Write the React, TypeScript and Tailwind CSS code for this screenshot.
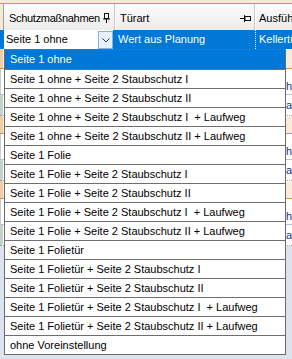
import React from "react";

const items = [
  "Seite 1 ohne",
  "Seite 1 ohne + Seite 2 Staubschutz I",
  "Seite 1 ohne + Seite 2 Staubschutz II",
  "Seite 1 ohne + Seite 2 Staubschutz I  + Laufweg",
  "Seite 1 ohne + Seite 2 Staubschutz II + Laufweg",
  "Seite 1 Folie",
  "Seite 1 Folie + Seite 2 Staubschutz I",
  "Seite 1 Folie + Seite 2 Staubschutz II",
  "Seite 1 Folie + Seite 2 Staubschutz I  + Laufweg",
  "Seite 1 Folie + Seite 2 Staubschutz II + Laufweg",
  "Seite 1 Folietür",
  "Seite 1 Folietür + Seite 2 Staubschutz I",
  "Seite 1 Folietür + Seite 2 Staubschutz II",
  "Seite 1 Folietür + Seite 2 Staubschutz I  + Laufweg",
  "Seite 1 Folietür + Seite 2 Staubschutz II + Laufweg",
  "ohne Voreinstellung",
];

function PinDown() {
  return (
    <svg width="7" height="10" viewBox="0 0 7 10" className="block">
      <rect x="1.5" y="0.5" width="4" height="5" fill="none" stroke="#111" />
      <line x1="0" y1="6" x2="7" y2="6" stroke="#111" />
      <line x1="3.5" y1="6" x2="3.5" y2="10" stroke="#111" />
    </svg>
  );
}

function PinSide() {
  return (
    <svg width="11" height="7" viewBox="0 0 11 7" className="block">
      <line x1="0" y1="3.5" x2="4" y2="3.5" stroke="#111" />
      <line x1="4.5" y1="0" x2="4.5" y2="7" stroke="#111" />
      <rect x="5" y="1.5" width="5.5" height="4" fill="none" stroke="#111" />
    </svg>
  );
}

function Block({ beige }: { beige: number }) {
  return (
    <>
      <div className="flex" style={{ height: beige }}>
        <div className="w-[3px] bg-[#eccfa8]" />
        <div className="flex-1 bg-[#f7ecda] border-t border-white" />
      </div>
      <div className="h-[1px] bg-[#c8965a]" />
      <div className="flex h-[25px] bg-white">
        <div className="w-[3px] bg-[#c4d2ca]" />
        <div className="flex-1 flex items-end pb-[2px]">
          <div className="w-[283px]" />
          <span className="text-[#1e2f8a] leading-none">ih</span>
        </div>
      </div>
      <div className="h-[1px] bg-[#b4c4d2]" />
      <div className="flex h-[20px] bg-white">
        <div className="w-[3px] bg-[#c4d2ca]" />
        <div className="flex-1 flex items-center">
          <div className="w-[283px]" />
          <span className="text-[#1e2f8a] leading-none">a</span>
        </div>
      </div>
      <div className="h-[1px] border-t border-dotted border-[#a0a0a0] bg-white" />
    </>
  );
}

export default function App() {
  return (
    <div className="relative w-[292px] h-[359px] overflow-hidden bg-[#dde3ed] text-[11px] text-black font-['Liberation_Sans',Arial,sans-serif]">
      {/* top strip */}
      <div className="h-[3px] bg-[#f6ead6]" />
      <div className="h-[1px] bg-[#c89a5a]" />
      {/* header */}
      <div className="flex h-[26px]">
        <div className="w-[3px] bg-[#f6ead6]" />
        <div className="w-[112px] flex items-center justify-between pl-[5px] pr-[4px] pt-[2px] border-l border-[#a0a0a0] border-r border-r-[#c8c8c8] bg-gradient-to-b from-[#fcfcfc] to-[#ececec]">
          <span className="whitespace-nowrap tracking-[-0.3px]">Schutzmaßnahmen</span>
          <PinDown />
        </div>
        <div className="w-[140px] flex items-center justify-between pl-[4px] pr-[3px] pt-[2px] border-l border-white border-r border-r-[#c8c8c8] bg-gradient-to-b from-[#fcfcfc] to-[#ececec]">
          <span className="whitespace-nowrap">Türart</span>
          <PinSide />
        </div>
        <div className="flex-1 flex items-center pl-[3px] pt-[2px] border-l border-white bg-gradient-to-b from-[#fcfcfc] to-[#ececec] overflow-hidden">
          <span className="whitespace-nowrap">Ausführung</span>
        </div>
      </div>
      {/* selected row */}
      <div className="flex h-[19px] bg-[#0078d7] text-white">
        <div className="w-[4px]" />
        <div className="w-[109px] flex bg-white text-black">
          <div className="flex-1 flex items-center pl-[2px] whitespace-nowrap">Seite 1 ohne</div>
          <div className="w-[15px] mt-[1px] flex items-center justify-center bg-[#e5f1fb] border border-[#7eb4ea]">
            <svg width="8" height="5" viewBox="0 0 8 5">
              <polyline points="0.5,0.5 4,4 7.5,0.5" fill="none" stroke="#333" strokeWidth="1" />
            </svg>
          </div>
        </div>
        <div className="w-[2px]" />
        <div className="w-[140px] flex items-center pl-[3px] whitespace-nowrap">Wert aus Planung</div>
        <div className="flex-1 flex items-center pl-[3px] border-l border-dotted border-white whitespace-nowrap overflow-hidden">
          Kellertür
        </div>
      </div>
      {/* grid behind */}
      <Block beige={19} />
      <Block beige={17} />
      <Block beige={17} />

      {/* dropdown list */}
      <div className="absolute left-[4px] top-[49px] w-[282px] bg-white border border-[#6a6a6a]">
        {items.map((t, i) => (
          <div
            key={i}
            className={
              i === 0
                ? "h-[19px] flex items-center pl-[5px] whitespace-pre bg-[#0078d7] text-white"
                : "h-[19px] flex items-center pl-[5px] whitespace-pre border-t border-[#6e6e6e]"
            }
          >
            {t}
          </div>
        ))}
      </div>
    </div>
  );
}
